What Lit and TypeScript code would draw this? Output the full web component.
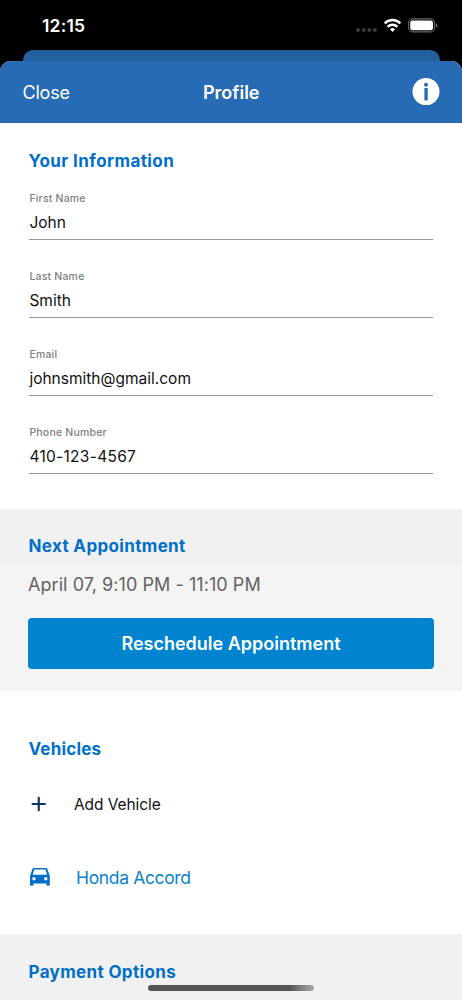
import { LitElement, html, css } from "lit";
import { customElement, property } from "lit/decorators.js";

const FIELDS = [
  { label: "First Name", value: "John" },
  { label: "Last Name", value: "Smith" },
  { label: "Email", value: "johnsmith@gmail.com" },
  { label: "Phone Number", value: "410-123-4567", numeric: true },
];

@customElement("status-bar")
class StatusBar extends LitElement {
  static styles = css`
    :host {
      display: flex;
      height: 49.5px;
      box-sizing: border-box;
      padding: 0 24px 0 42px;
      justify-content: space-between;
      background: #000;
      color: #fff;
    }
    .time {
      font-size: 17.5px;
      font-weight: 600;
      line-height: 22px;
      padding-top: 15px;
      letter-spacing: 0.2px;
    }
    svg {
      display: block;
      margin-top: 16px;
    }
  `;
  render() {
    return html`
      <span class="time">12:15</span>
      <svg width="84" height="20" viewBox="354 16 84 20">
        <g fill="#3a3a3a">
          <circle cx="358" cy="30" r="2" /><circle cx="363.7" cy="30" r="2" />
          <circle cx="369.3" cy="30" r="2" /><circle cx="374.8" cy="30" r="2" />
        </g>
        <g fill="none" stroke="#fff" stroke-width="2.5">
          <path d="M384.7 23.3a11.1 11.1 0 0 1 15.6 0" />
          <path d="M387.6 26.8a7 7 0 0 1 9.8 0" />
        </g>
        <path d="M392.5 31.9l-2.6-2.7a3.8 3.8 0 0 1 5.2 0z" fill="#fff" />
        <rect x="408.6" y="18.9" width="26" height="13" rx="4" fill="none" stroke="#666" stroke-width="1.1" />
        <rect x="410.2" y="20.5" width="22.8" height="9.8" rx="2.2" fill="#fff" />
        <path d="M436 23.4c1.9.7 1.9 3.3 0 4z" fill="#777" />
      </svg>
    `;
  }
}

@customElement("profile-field")
class ProfileField extends LitElement {
  @property() label = "";
  @property() value = "";
  @property({ type: Boolean }) numeric = false;
  static styles = css`
    :host {
      display: block;
      height: 49px;
      box-sizing: border-box;
      border-bottom: 1px solid #979797;
      margin-bottom: 29px;
    }
    .label {
      font-size: 10.5px;
      font-weight: 500;
      line-height: 14px;
      padding: 1px 0 0 0.4px;
      letter-spacing: 0.2px;
      color: #808080;
    }
    .value {
      font-size: 15.5px;
      line-height: 20px;
      padding: 7px 0 0 0.4px;
      color: #111;
    }
    .numeric {
      letter-spacing: 0.3px;
    }
  `;
  render() {
    return html`<div class="label">${this.label}</div>
      <div class="value ${this.numeric ? "numeric" : ""}">${this.value}</div>`;
  }
}

@customElement("app-root")
class AppRoot extends LitElement {
  static styles = css`
    :host {
      display: block;
      position: relative;
      height: 1000px;
      overflow: hidden;
      background: #000;
      font-family: Inter, "Liberation Sans", sans-serif;
      white-space: nowrap;
    }
    .behind {
      height: 22px;
      margin: 0 22.5px -11px;
      border-radius: 10px 10px 0 0;
      background: #225f9f;
    }
    .sheet {
      position: relative;
      border-radius: 11px 11px 0 0;
      overflow: hidden;
      background: #fff;
    }
    .nav {
      display: grid;
      grid-template-columns: 1fr auto 1fr;
      align-items: center;
      height: 62.5px;
      padding: 1px 22px 0 22.5px;
      box-sizing: border-box;
      background: #266bb3;
      color: #fff;
      font-size: 18px;
    }
    .close {
      letter-spacing: -0.2px;
    }
    .title {
      font-weight: 600;
    }
    .info {
      justify-self: end;
      display: block;
    }
    h2 {
      margin: 0;
      font-size: 17px;
      font-weight: 700;
      line-height: 22px;
      color: #006fc9;
      letter-spacing: 0.35px;
    }
    .yours {
      height: 386px;
      box-sizing: border-box;
      padding: 27px 29px 0;
    }
    .yours h2 {
      margin: 0 0 19px -0.5px;
      letter-spacing: 0.42px;
    }
    .next-head,
    .payment {
      background: #f1f1f1;
      padding: 27px 28.5px 0;
      box-sizing: border-box;
    }
    .next-head {
      height: 56px;
      padding-top: 26px;
    }
    .next-body {
      background: #f4f4f4;
      height: 126px;
      box-sizing: border-box;
      padding: 8px 28px 0;
    }
    .date {
      font-size: 18px;
      line-height: 24px;
      color: #636363;
      letter-spacing: 0.06px;
      margin-bottom: 20.5px;
    }
    .button {
      display: block;
      width: 100%;
      height: 51.5px;
      border: 0;
      padding: 0;
      border-radius: 4px;
      background: #0084cf;
      color: #fff;
      font: 600 18px Inter, sans-serif;
      letter-spacing: 0;
    }
    .vehicles {
      height: 243px;
      box-sizing: border-box;
      padding: 47px 28.5px 0;
    }
    .vehicles h2 {
      letter-spacing: 0.2px;
    }
    .row {
      display: flex;
      align-items: center;
      height: 24px;
    }
    .add {
      margin-top: 32px;
      font-size: 15.5px;
      letter-spacing: -0.08px;
      color: #111;
    }
    .car {
      margin-top: 49px;
      font-size: 17.5px;
      letter-spacing: -0.35px;
      color: #0b82cc;
    }
    .row svg {
      flex: none;
    }
    .add svg {
      margin-right: 25.5px;
    }
    .car svg {
      margin: 0 25.5px 0 0;
    }
    .payment {
      height: 66px;
    }
    .home {
      position: absolute;
      left: 148px;
      top: 985px;
      width: 165.5px;
      height: 6px;
      border-radius: 3px;
      background: linear-gradient(90deg, #555 0 85%, #aaa);
    }
  `;

  render() {
    return html`
      <status-bar></status-bar>
      <div class="behind"></div>
      <div class="sheet">
        <div class="nav">
          <span class="close">Close</span>
          <span class="title">Profile</span>
          <svg class="info" width="28" height="28" viewBox="0 0 28 28">
            <circle cx="14" cy="13.6" r="13.5" fill="#fff" />
            <circle cx="14" cy="6.8" r="2" fill="#266bb3" />
            <path d="M12.4 10h3.3v12.400h-3.300z" fill="#266bb3" />
          </svg>
        </div>
        <section class="yours">
          <h2>Your Information</h2>
          ${FIELDS.map(
            (f) =>
              html`<profile-field .label=${f.label} .value=${f.value} .numeric=${!!f.numeric}></profile-field>`
          )}
        </section>
        <section>
          <div class="next-head"><h2>Next Appointment</h2></div>
          <div class="next-body">
            <div class="date">April 07, 9:10 PM - 11:10 PM</div>
            <button class="button">Reschedule Appointment</button>
          </div>
        </section>
        <section class="vehicles">
          <h2>Vehicles</h2>
          <div class="row add">
            <svg width="20" height="20" viewBox="0 0 20 20">
              <path
                d="M3.6 10h12.300M9.750 3.850v12.300"
                stroke="#0b3764"
                stroke-width="2.2"
                stroke-linecap="round"
                fill="none"
              />
            </svg>
            <span>Add Vehicle</span>
          </div>
          <div class="row car">
            <svg width="22" height="20" viewBox="0 0 22 20">
              <path
                fill="#006fc9"
                fill-rule="evenodd"
                d="M18.4 2.1C18.2 1.4 17.6.9 16.8.9H5c-.8 0-1.4.5-1.6 1.2L1 9v8.600q0 1.200 1.200 1.200h1q1.200 0 1.200-1.200v-1.100h13v1.100q0 1.200 1.200 1.200h1q1.200 0 1.200-1.200V9zM5.200 2.500h11.400l1.500 5.200H3.700zM5 13.500a1.700 1.700 0 1 1 0-3.400 1.700 1.700 0 0 1 0 3.400zm11.800 0a1.700 1.700 0 1 1 0-3.400 1.700 1.700 0 0 1 0 3.400z"
              />
            </svg>
            <span>Honda Accord</span>
          </div>
        </section>
        <section class="payment"><h2>Payment Options</h2></section>
      </div>
      <div class="home"></div>
    `;
  }
}
